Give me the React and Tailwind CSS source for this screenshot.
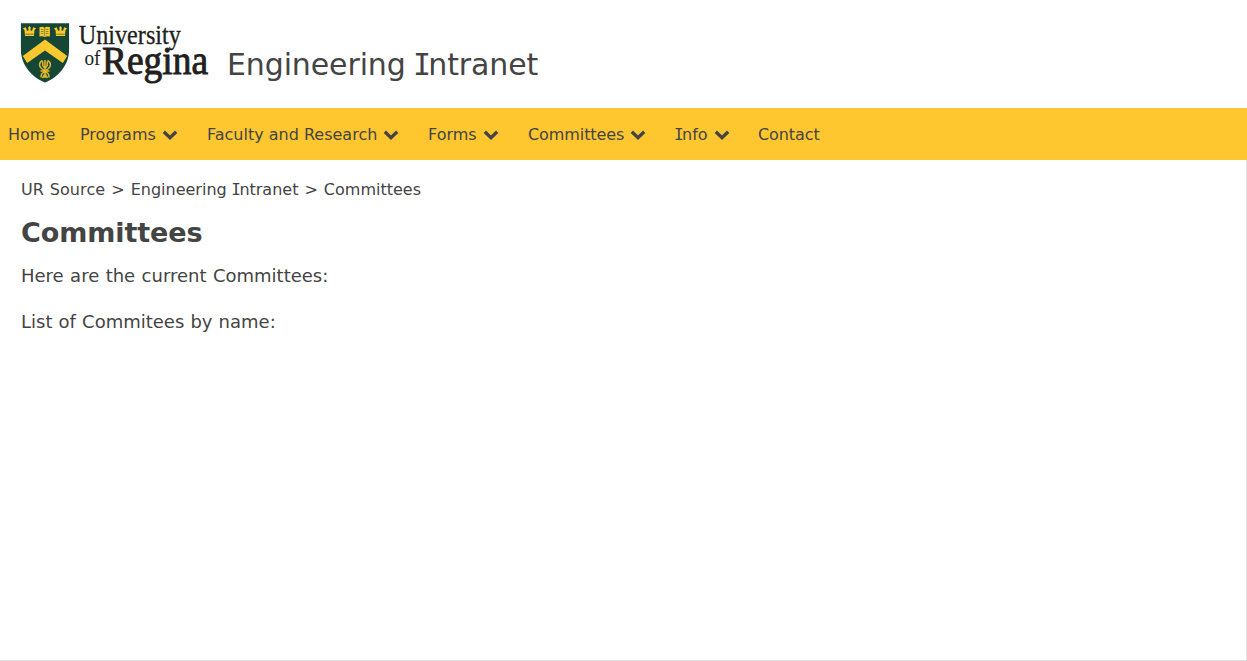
function SerifI() {
  return <span className="-mr-[0.09em] -ml-[0.07em] font-['DejaVu_Sans_Mono',monospace]">I</span>;
}

function Chevron() {
  return (
    <svg width="16" height="12" viewBox="0 0 16 12" fill="none" stroke="#444" strokeWidth="3.3" className="shrink-0">
      <path d="M1.800 2.700 8 8.700l6.200-6" />
    </svg>
  );
}

function Crown({ x }) {
  return (
    <g transform={`translate(${x} 0)`} fill="#fdc82f">
      <path d="M0 6.200 2.800 5.200 4 8.800 5.600 8.500 5.200 5.600 6.500 4 7.800 5.600 7.400 8.500 9 8.800 10.200 5.200 13 6.200 11.400 8.500 11 14H2L1.600 8.500z" />
      <path d="M2.200 12.200h8.600" stroke="#154734" strokeWidth=".6" />
    </g>
  );
}

function Logo() {
  return (
    <svg width="190" height="66" viewBox="0 0 190 66" className="shrink-0">
      <path d="M.900 1.200h48.200v26.500C49.100 43 38 55.500 25 60.500 12 55.500.900 43 .900 27.700z" fill="#154734" />
      <Crown x={3} />
      <Crown x={34} />
      <path d="M19.500 5.300q3.200-1.200 5.200.4 2-1.600 5.200-.4V14.500q-3-.8-5.200.5-2.200-1.300-5.200-.5z" fill="#fdc82f" />
      <path d="M24.700 5.700v8.500M21 7.500h2.400M21 9.500h2.400M21 11.500h2.400M26 7.500h2.400M26 9.500h2.400M26 11.500h2.400" stroke="#154734" strokeWidth=".5" />
      <path d="M25 17.500 47.200 34 42.800 41 25 28.500 7.200 41 2.800 34z" fill="#fdc82f" />
      <g stroke="#e3b62f" fill="none" strokeWidth="1.500">
        <path d="M25 38v18M22.500 38.500c-4 2-3.500 6-1 8l3.500 2.500 3.500-2.500c2.500-2 3-6-1-8M22.800 39.500v4l2.200 3 2.200-3v-4M20.500 49h9M21 55.500c0-4 1-4 4-6 3 2 4 2 4 6M22.500 56l2.500-4 2.500 4" />
      </g>
      <g fill="#231f20" stroke="#231f20" fontFamily="'Liberation Serif', serif">
        <text x="58.800" y="21.500" fontSize="27" strokeWidth=".35" textLength="102" lengthAdjust="spacingAndGlyphs">University</text>
        <text x="64.500" y="43" fontSize="22" strokeWidth=".1" textLength="16" lengthAdjust="spacingAndGlyphs">of</text>
        <text x="82" y="52.200" fontSize="39" strokeWidth=".9" textLength="106" lengthAdjust="spacingAndGlyphs">Regina</text>
      </g>
    </svg>
  );
}

function NavItem({ width, label, menu }) {
  return (
    <a className={`flex shrink-0 items-center gap-[6px] ${width}`}>
      <span>{label}</span>
      {menu && <Chevron />}
    </a>
  );
}

export default function App() {
  return (
    <div className="flex h-[661px] w-full flex-col overflow-hidden bg-white font-['DejaVu_Sans',sans-serif] text-[#444]">
      <header className="flex h-[108px] shrink-0 pl-5 pt-[22px]">
        <Logo />
        <div className="ml-[17px] whitespace-nowrap pt-[21px] text-[30px] leading-[44px] tracking-[-0.12px]">
          Engineering <SerifI />ntranet
        </div>
      </header>
      <nav className="flex h-[52px] shrink-0 whitespace-nowrap bg-[#ffc72f] pl-2 pt-[2px] text-[16px]">
        <NavItem width="w-[72px]" label="Home" />
        <NavItem width="w-[127px]" label="Programs" menu />
        <NavItem width="w-[221px]" label="Faculty and Research" menu />
        <NavItem width="w-[100px]" label="Forms" menu />
        <NavItem width="w-[147px]" label={<span className="tracking-[-0.08px]">Committees</span>} menu />
        <NavItem width="w-[83px]" label={<><SerifI />nfo</>} menu />
        <NavItem width="w-[70px]" label={<span className="tracking-[-0.1px]">Contact</span>} />
      </nav>
      <main className="flex-1 border-b border-r border-[#e2e2e2] pl-[21px] pt-[18px]">
        <div className="flex h-6 gap-[6px] whitespace-nowrap text-[16px] leading-6">
          <span className="tracking-[0.1px] [word-spacing:0.5px]">UR Source</span>
          <span>&gt;</span>
          <span className="[word-spacing:0.5px]">Engineering <SerifI />ntranet</span>
          <span>&gt;</span>
          <span>Committees</span>
        </div>
        <h1 className="mt-[13px] h-9 text-[27px] font-bold leading-9 tracking-[-0.1px]">Committees</h1>
        <p className="mt-[13px] h-6 text-[18px] leading-6 [word-spacing:0.7px]">Here are the current Committees:</p>
        <p className="mt-[22px] h-6 text-[18px] leading-6 [word-spacing:0.4px]">List of Commitees by name:</p>
      </main>
    </div>
  );
}
